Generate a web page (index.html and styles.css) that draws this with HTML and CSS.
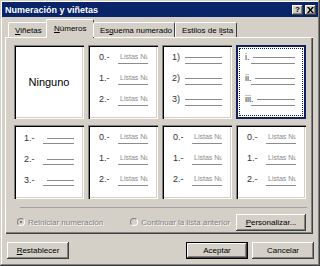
FILE: index.html
```html
<!DOCTYPE html>
<html lang="es">
<head>
<meta charset="utf-8">
<title>Numeración y viñetas</title>
<link rel="stylesheet" href="styles.css">
</head>
<body>
<div class="win">
  <div class="title">
    <span class="title-text">Numeración y viñetas</span>
    <div class="tbtns">
      <span class="tbtn">?</span>
      <span class="tbtn">
        <svg width="7" height="6" viewBox="0 0 7 6"><path d="M0 0h2l1.5 2 1.5-2h2l-2.5 3 2.5 3h-2l-1.5-2-1.5 2h-2l2.5-3z" fill="#000"/></svg>
      </span>
    </div>
  </div>

  <div class="tabs">
    <div class="tab"><u>V</u>iñetas</div>
    <div class="tab active"><u>N</u>úmeros</div>
    <div class="tab">Es<u>q</u>uema numerado</div>
    <div class="tab">Estilos de l<u>i</u>sta</div>
  </div>

  <div class="panel">
    <div class="grid">
      <div class="cell none">Ninguno</div>

      <div class="cell lst">
        <div class="it"><span class="num">0.-</span><div class="col"><span class="lbl">Listas Nu</span><span class="ln"></span></div></div>
        <div class="it"><span class="num">1.-</span><div class="col"><span class="lbl">Listas Nu</span><span class="ln"></span></div></div>
        <div class="it"><span class="num">2.-</span><div class="col"><span class="lbl">Listas Nu</span><span class="ln"></span></div></div>
      </div>

      <div class="cell par">
        <div class="it"><div class="top"><span class="num">1)</span><span class="ln1"></span></div><span class="ln2"></span></div>
        <div class="it"><div class="top"><span class="num">2)</span><span class="ln1"></span></div><span class="ln2"></span></div>
        <div class="it"><div class="top"><span class="num">3)</span><span class="ln1"></span></div><span class="ln2"></span></div>
      </div>

      <div class="cell rom sel">
        <div class="it"><div class="top"><span class="num">i.</span><span class="ln1"></span></div><span class="ln2"></span></div>
        <div class="it"><div class="top"><span class="num">ii.</span><span class="ln1"></span></div><span class="ln2"></span></div>
        <div class="it"><div class="top"><span class="num">iii.</span><span class="ln1"></span></div><span class="ln2"></span></div>
      </div>

      <div class="cell dash">
        <div class="it"><div class="top"><span class="num">1.-</span><span class="ln1"></span></div><span class="ln2"></span></div>
        <div class="it"><div class="top"><span class="num">2.-</span><span class="ln1"></span></div><span class="ln2"></span></div>
        <div class="it"><div class="top"><span class="num">3.-</span><span class="ln1"></span></div><span class="ln2"></span></div>
      </div>

      <div class="cell lst">
        <div class="it"><span class="num">0.-</span><div class="col"><span class="lbl">Listas Nu</span><span class="ln"></span></div></div>
        <div class="it"><span class="num">1.-</span><div class="col"><span class="lbl">Listas Nu</span><span class="ln"></span></div></div>
        <div class="it"><span class="num">2.-</span><div class="col"><span class="lbl">Listas Nu</span><span class="ln"></span></div></div>
      </div>

      <div class="cell lst">
        <div class="it"><span class="num">0.-</span><div class="col"><span class="lbl">Listas Nu</span><span class="ln"></span></div></div>
        <div class="it"><span class="num">1.-</span><div class="col"><span class="lbl">Listas Nu</span><span class="ln"></span></div></div>
        <div class="it"><span class="num">2.-</span><div class="col"><span class="lbl">Listas Nu</span><span class="ln"></span></div></div>
      </div>

      <div class="cell lst">
        <div class="it"><span class="num">0.-</span><div class="col"><span class="lbl">Listas Nu</span><span class="ln"></span></div></div>
        <div class="it"><span class="num">1.-</span><div class="col"><span class="lbl">Listas Nu</span><span class="ln"></span></div></div>
        <div class="it"><span class="num">2.-</span><div class="col"><span class="lbl">Listas Nu</span><span class="ln"></span></div></div>
      </div>
    </div>

    <div class="sep"></div>

    <div class="opts">
      <label class="radio dis r1"><span class="rb on"></span>Reiniciar numeración</label>
      <label class="radio dis r2"><span class="rb"></span>Continuar la lista anterior</label>
      <button class="btn pers"><u>P</u>ersonalizar...</button>
    </div>
  </div>

  <div class="footer">
    <button class="btn"><u>R</u>establecer</button>
    <div class="right">
      <button class="btn def">Aceptar</button>
      <button class="btn">Cancelar</button>
    </div>
  </div>
</div>
</body>
</html>
```

FILE: styles.css
```css
* { box-sizing: border-box; }
html, body { margin: 0; padding: 0; }
body {
  width: 320px;
  height: 266px;
  overflow: hidden;
  background: #d4d0c8;
  font-family: "Liberation Sans", Arial, sans-serif;
  font-size: 8px;
  color: #000;
}
.win {
  width: 320px;
  height: 266px;
  padding: 2px;
  display: flex;
  flex-direction: column;
  background: #d4d0c8;
  box-shadow: inset -1px -1px #404040, inset 1px 1px #d4d0c8, inset -2px -2px #808080, inset 2px 2px #fff;
}
.title {
  height: 15px;
  background: #0a246a;
  display: flex;
  align-items: center;
  justify-content: space-between;
  padding: 0 2px 0 3px;
}
.title-text {
  color: #fff;
  font-weight: bold;
  font-size: 9px;
}
.tbtns { display: flex; gap: 2px; }
.tbtn {
  width: 11px;
  height: 10px;
  background: #d4d0c8;
  box-shadow: inset -1px -1px #404040, inset 1px 1px #fff, inset -2px -2px #808080;
  display: flex;
  align-items: center;
  justify-content: center;
  font-weight: bold;
  font-size: 8px;
  line-height: 1;
}
.tabs {
  display: flex;
  margin-top: 2px;
  height: 18px;
  padding-left: 6px;
  position: relative;
  z-index: 1;
}
.tab {
  margin-top: 3px;
  height: 15px;
  padding: 0 6px;
  display: flex;
  align-items: center;
  border-top: 1px solid #fff;
  border-left: 1px solid #fff;
  border-right: 1px solid #404040;
  border-radius: 2px 2px 0 0;
  white-space: nowrap;
}
.tab.active {
  margin: 0 -1px;
  height: 19px;
  padding: 0 7px 2px;
  background: #d4d0c8;
}
.tab:nth-child(1) { width: 39px; }
.tab:nth-child(2) { width: 48px; }
.tab:nth-child(3) { width: 82px; }
.tab:nth-child(4) { width: 62px; }
.panel {
  margin: 0 5px 0 3px;
  height: 197px;
  box-shadow: inset 1px 1px #fff, inset -1px -1px #404040, inset -2px -2px #808080;
  padding: 8px 0 0 9px;
  display: flex;
  flex-direction: column;
}
.grid {
  display: grid;
  grid-template-columns: repeat(4, 70px);
  grid-template-rows: 74px 74px;
  column-gap: 4px;
  row-gap: 6px;
}
.cell {
  background: #fff;
  position: relative;
  box-shadow: inset 1px 1px #808080, inset 2px 2px #000, inset -1px -1px #fff, inset -2px -2px #d4d0c8;
  overflow: hidden;
}
.cell.none {
  display: flex;
  align-items: center;
  justify-content: center;
  font-size: 11px;
  color: #000;
}
.cell.sel {
  box-shadow: inset 0 0 0 1px #0a246a, inset 0 0 0 2px #1a1a50;
}
.cell.sel::after {
  content: "";
  position: absolute;
  top: 3px;
  left: 3px;
  right: 3px;
  bottom: 3px;
  border: 1px dotted #0a246a;
}
.num {
  font-size: 9px;
  color: #333;
  line-height: 10px;
}
.cell.sel .num { color: #333; }
/* "Listas" style */
.lst { padding: 7px 0 0 11px; display: flex; flex-direction: column; }
.lst .it { display: flex; height: 21px; }
.lst .num { width: 19px; }
.lst .col { width: 30px; display: flex; flex-direction: column; }
.lst .lbl {
  font-size: 7px;
  color: #8a8a8a;
  line-height: 10px;
  height: 10px;
  white-space: nowrap;
  overflow: hidden;
  padding-left: 2px;
}
.lst .ln { height: 1px; background: #8c8c8c; margin-top: 1px; }
/* line style cells */
.par, .rom, .dash { display: flex; flex-direction: column; }
.par { padding: 7px 10px 0 10px; }
.rom { padding: 7px 11px 0 9px; }
.dash { padding: 8px 10px 0 10px; }
.par .it, .rom .it, .dash .it { height: 21px; display: flex; flex-direction: column; }
.top { display: flex; align-items: center; height: 10px; }
.ln1 { flex: 1; height: 1px; background: #8c8c8c; margin-left: 3px; }
.ln2 { height: 1px; background: #8c8c8c; margin-top: 1px; }
.par .num { width: 10px; }
.par .ln2 { margin-left: 13px; }
.rom .ln2 { margin-left: 6px; }
.dash .num { width: 20px; }
.dash .ln2 { margin-left: 19px; margin-top: 0; }
.sep {
  margin: 8px 6px 0 6px;
  height: 1px;
  background: #a0a0a0;
}
.opts {
  display: flex;
  align-items: center;
  margin-top: 5px;
  height: 18px;
  padding-right: 7px;
}
.radio {
  display: flex;
  align-items: center;
  gap: 3px;
  white-space: nowrap;
}
.radio.dis { color: #808080; text-shadow: 1px 1px #fff; }
.radio.r1 { margin-left: 3px; }
.radio.r2 { margin-left: 27px; }
.rb {
  width: 8px;
  height: 8px;
  border-radius: 50%;
  background: #d4d0c8;
  border: 1px solid;
  border-color: #808080 #fff #fff #808080;
  position: relative;
}
.rb.on::after {
  content: "";
  position: absolute;
  left: 2px;
  top: 2px;
  width: 2px;
  height: 2px;
  background: #808080;
}
.btn {
  font-family: inherit;
  font-size: 8px;
  color: #000;
  background: #d4d0c8;
  border: none;
  padding: 0;
  height: 17px;
  box-shadow: inset -1px -1px #404040, inset 1px 1px #fff, inset -2px -2px #808080, inset 2px 2px #d4d0c8;
  display: flex;
  align-items: center;
  justify-content: center;
}
.pers { width: 70px; margin-left: auto; }
.footer {
  display: flex;
  justify-content: space-between;
  margin-top: 8px;
  padding: 0 4px 0 5px;
}
.footer .btn { width: 62px; }
.right { display: flex; gap: 4px; }
.btn.def { box-shadow: inset 0 0 0 1px #000, inset -2px -2px #404040, inset 2px 2px #fff, inset -3px -3px #808080; }
```
